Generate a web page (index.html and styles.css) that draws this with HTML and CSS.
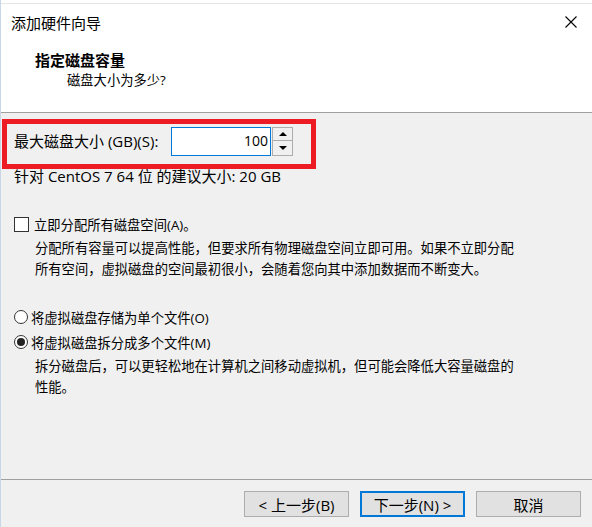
FILE: index.html
```html
<!DOCTYPE html>
<html lang="zh-CN">
<head>
    <meta charset="UTF-8">
    <meta name="viewport" content="width=device-width, initial-scale=1.0">
    <title>添加硬件向导</title>
    <link rel="stylesheet" href="styles.css">
</head>
<body>
    <div class="window">
        <div class="top-strip"></div>
        <div class="header">
            <div class="titlebar">
                <span class="title">添加硬件向导</span>
                <svg class="close" width="12" height="12" viewBox="0 0 12 12">
                    <path d="M0.5 0.5 L11.5 11.5 M11.5 0.5 L0.5 11.5" stroke="#000" stroke-width="1.1" fill="none"/>
                </svg>
            </div>
            <div class="step-title">指定磁盘容量</div>
            <div class="step-sub">磁盘大小为多少?</div>
        </div>

        <div class="content">
            <div class="size-box">
                <span class="size-label">最大磁盘大小 (GB)(S):</span>
                <div class="spin">
                    <div class="spin-input">100</div>
                    <div class="spin-buttons">
                        <div class="spin-btn"><span class="arrow-up"></span></div>
                        <div class="spin-btn"><span class="arrow-down"></span></div>
                    </div>
                </div>
            </div>
            <div class="hint">针对 CentOS 7 64 位 的建议大小: 20 GB</div>

            <label class="option check-row">
                <span class="checkbox"></span>
                <span>立即分配所有磁盘空间(A)。</span>
            </label>
            <div class="desc">
                分配所有容量可以提高性能，但要求所有物理磁盘空间立即可用。如果不立即分配<br>
                所有空间，虚拟磁盘的空间最初很小，会随着您向其中添加数据而不断变大。
            </div>

            <label class="option radio-row first">
                <span class="radio"></span>
                <span>将虚拟磁盘存储为单个文件(O)</span>
            </label>
            <label class="option radio-row">
                <span class="radio checked"></span>
                <span>将虚拟磁盘拆分成多个文件(M)</span>
            </label>
            <div class="desc">
                拆分磁盘后，可以更轻松地在计算机之间移动虚拟机，但可能会降低大容量磁盘的<br>
                性能。
            </div>
        </div>

        <div class="footer">
            <button class="btn">&lt; 上一步(B)</button>
            <button class="btn default">下一步(N) &gt;</button>
            <button class="btn">取消</button>
        </div>
    </div>
</body>
</html>
```

FILE: styles.css
```css
/* Estilos generales */
body {
    margin: 0;
    background: #f0f0f0;
    font-family: "Open Sans", "Noto Sans CJK SC", sans-serif;
    font-size: 13.3px;
    color: #000000;
}

.window {
    height: 527px;
    display: flex;
    flex-direction: column;
    border-left: 1px solid #c9d6ea;
    box-sizing: border-box;
}

.top-strip {
    height: 3px;
    background: #ffffff;
    border-bottom: 1px solid #e5e5e5;
}

/* Cabecera blanca */
.header {
    background: #ffffff;
    height: 109px;
    box-sizing: border-box;
    border-bottom: 1px solid #a0a0a0;
}

.titlebar {
    height: 36px;
    display: flex;
    align-items: center;
    justify-content: space-between;
    padding: 0 15px 0 10px;
}

.title {
    font-family: "Noto Sans CJK SC", sans-serif;
    font-size: 15px;
}

.step-title {
    margin-top: 10px;
    padding-left: 34px;
    line-height: 20px;
    font-family: "Noto Sans CJK SC", sans-serif;
    font-size: 15px;
    font-weight: bold;
}

.step-sub {
    padding-left: 66px;
    line-height: 20px;
}

/* Contenido */
.content {
    padding-top: 6px;
}

.size-box {
    margin-left: 1px;
    width: 314px;
    height: 50px;
    box-sizing: border-box;
    border: 5px solid #ed1c24;
    display: flex;
    align-items: flex-start;
    padding: 3px 0 0 7px;
}

.size-label {
    line-height: 29px;
    width: 157px;
    font-size: 15px;
}

.spin {
    display: flex;
}

.spin-input {
    width: 100px;
    height: 29px;
    box-sizing: border-box;
    border: 1px solid #0078d7;
    background: #ffffff;
    text-align: right;
    padding-right: 2px;
    line-height: 26px;
    font-size: 14px;
}

.spin-buttons {
    display: flex;
    flex-direction: column;
    margin-left: 1px;
}

.spin-btn {
    width: 21px;
    height: 14px;
    box-sizing: border-box;
    border: 1px solid #adadad;
    background: #f0f0f0;
    display: flex;
    align-items: center;
    justify-content: center;
}

.spin-btn + .spin-btn {
    height: 15px;
    border-top: none;
}

.arrow-up {
    width: 0;
    height: 0;
    border-left: 4px solid transparent;
    border-right: 4px solid transparent;
    border-bottom: 4px solid #000000;
}

.arrow-down {
    width: 0;
    height: 0;
    border-left: 4px solid transparent;
    border-right: 4px solid transparent;
    border-top: 4px solid #000000;
}

.hint {
    padding-left: 13px;
    line-height: 14px;
    font-size: 15px;
}

.option {
    display: flex;
    align-items: center;
    height: 20px;
    padding-left: 13px;
}

.check-row {
    margin-top: 31px;
}

.checkbox {
    width: 13px;
    height: 13px;
    border: 1px solid #333333;
    background: #ffffff;
    margin-right: 5px;
}

.radio {
    width: 12px;
    height: 12px;
    border: 1px solid #333333;
    border-radius: 50%;
    background: #ffffff;
    margin-right: 3px;
    display: flex;
    align-items: center;
    justify-content: center;
}

.radio.checked::after {
    content: "";
    width: 8px;
    height: 8px;
    border-radius: 50%;
    background: #222222;
}

.radio-row.first {
    margin-top: 27px;
}

.radio-row + .radio-row {
    margin-top: 5px;
}

.desc {
    margin-top: 4px;
    padding-left: 34px;
    line-height: 21px;
}

/* Botones */
.footer {
    margin-top: auto;
    border-top: 1px solid #a0a0a0;
    padding: 11px 11px 10px 0;
    display: flex;
    justify-content: flex-end;
    gap: 11px;
}

.btn {
    width: 105px;
    height: 26px;
    box-sizing: border-box;
    border: 1px solid #adadad;
    background: #e1e1e1;
    font-family: "Open Sans", "Noto Sans CJK SC", sans-serif;
    font-size: 15px;
    padding: 0;
    color: #000000;
}

.btn.default {
    border: 2px solid #0078d7;
}
```
